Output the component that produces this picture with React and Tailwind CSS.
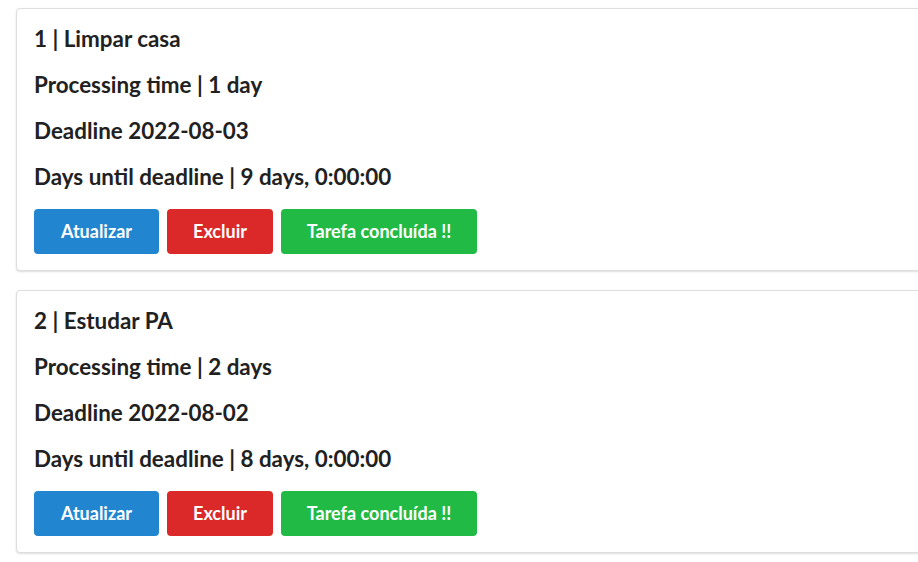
const tasks = [
  { id: 1, title: 'Limpar casa', processing: '1 day', deadline: '2022-08-03', until: '9 days, 0:00:00' },
  { id: 2, title: 'Estudar PA', processing: '2 days', deadline: '2022-08-02', until: '8 days, 0:00:00' },
];

const TaskCard = ({ task }) => (
  <div className="w-[1000px] ml-4 bg-white border border-[#dededf] rounded-[4px] shadow-[0_1px_2px_0_rgba(34,36,38,0.15)] px-[17px] pt-[17px] pb-4">
    <div className="flex flex-col gap-5 text-[22.4px] leading-[26px] font-bold text-[#212121]">
      <h3>{task.id} | {task.title}</h3>
      <h3>Processing time | {task.processing}</h3>
      <h3>Deadline {task.deadline}</h3>
      <h3>Days until deadline | {task.until}</h3>
    </div>
    <div className="flex gap-2 mt-[19px]">
      <button className="w-[125px] h-[45px] rounded-[4px] bg-[#2185d0] text-white font-bold text-[18px]">Atualizar</button>
      <button className="w-[106px] h-[45px] rounded-[4px] bg-[#db2828] text-white font-bold text-[18px]">Excluir</button>
      <button className="w-[196px] h-[45px] rounded-[4px] bg-[#21ba45] text-white font-bold text-[18px]">Tarefa concluída !!</button>
    </div>
  </div>
);

export default function App() {
  return (
    <div className="w-full overflow-hidden bg-white min-h-[562px] pt-2 font-['Lato',sans-serif]">
      <div className="flex flex-col gap-[19px]">
        {tasks.map((t) => (
          <TaskCard key={t.id} task={t} />
        ))}
      </div>
    </div>
  );
}
